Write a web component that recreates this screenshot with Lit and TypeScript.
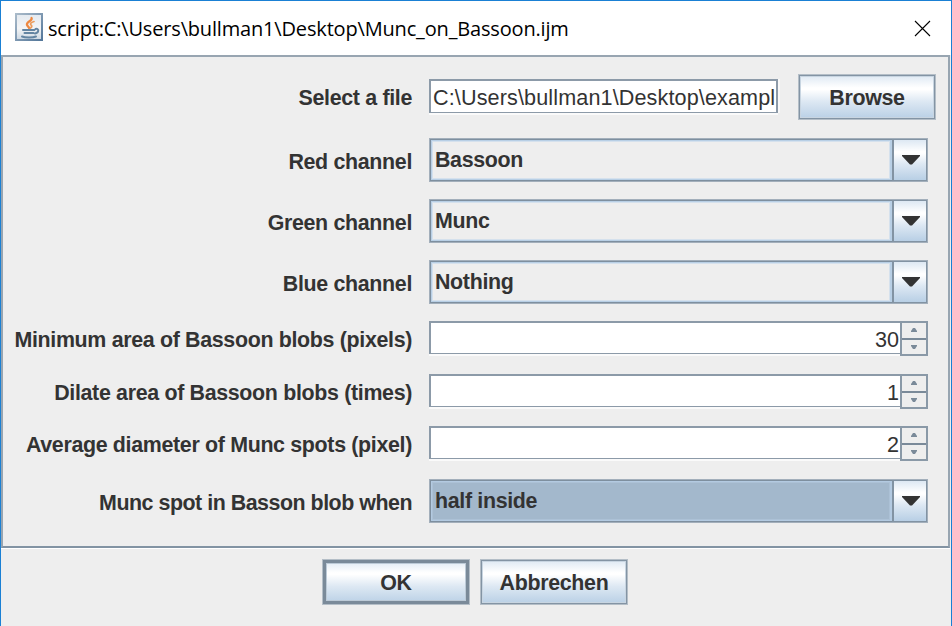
import { LitElement, html, svg, css } from "lit";
import { customElement, property } from "lit/decorators.js";

const metal = css`
  :host { display: block; box-sizing: border-box; }
  * { box-sizing: border-box; }
  .bold { font: bold 21.4px/24px "Liberation Sans", Arial, sans-serif; letter-spacing: -.33px; color: #333; white-space: nowrap; }
  .plain { font: 21.6px/24px "Liberation Sans", Arial, sans-serif; color: #333; white-space: nowrap; }
  .gloss { background: linear-gradient(#dde8f3 0%, #fff 29%, #fff 33%, #dde8f3 60%, #b8cfe5 100%); }
`;

@customElement("metal-button")
class MetalButton extends LitElement {
  @property() label = "";
  @property({ type: Boolean }) primary = false;
  static styles = [metal, css`
    .button { height: 100%; border: 1px solid #b4bec7; box-shadow: inset 0 0 0 1px #8394a4, inset 0 0 0 2px #c8d5e1; display: flex; align-items: center; justify-content: center; padding-top: 2px; }
    .primary { box-shadow: inset 0 0 0 3px #7a8a99, inset 0 0 0 4px #bccad7; }
  `];
  render() {
    return html`<div class="button gloss ${this.primary ? "primary" : ""}"><span class="bold">${this.label}</span></div>`;
  }
}

@customElement("metal-combo")
class MetalCombo extends LitElement {
  @property() value = "";
  @property({ type: Boolean }) focused = false;
  static styles = [metal, css`
    :host { height: 44px; }
    .combo { height: 100%; display: flex; border: 1px solid #a3afbb; }
    .value { flex: 1; padding: 9px 0 0 5px; background: #eee; box-shadow: inset 0 1px 0 #7e8f9f, inset 1px 0 0 #7e8f9f, inset 0 -1px 0 #7e8f9f, inset 0 0 0 2px #b8cfe5, inset 0 0 0 3px #d5e1ed; }
    .focused { background: #a3b8cc; box-shadow: inset 0 1px 0 #7e8f9f, inset 1px 0 0 #7e8f9f, inset 0 -1px 0 #7e8f9f, inset 0 0 0 2px #b3cae1, inset 0 0 0 3px #acc1d6; }
    .arrow { width: 35px; border: solid #8293a3; border-width: 1px 1px 1px 2px; display: flex; align-items: center; justify-content: center; padding-left: 1px; }
  `];
  render() {
    return html`<div class="combo">
      <div class="value bold ${this.focused ? "focused" : ""}">${this.value}</div>
      <div class="arrow gloss"><svg width="18" height="10" viewBox="0 0 18 10"><path d="M0 0H18V1L10 9.500H8L0 1Z" fill="#333"/></svg></div>
    </div>`;
  }
}

@customElement("metal-field")
class MetalField extends LitElement {
  @property() value = "";
  static styles = [metal, css`
    :host { height: 34px; }
    .field { height: 100%; background: #fff; border: 2px solid #8c9aa8; border-bottom-width: 1px; box-shadow: 0 2px 0 #fafafa, 2px 0 0 #f8f8f8; padding: 5px 0 0 2px; overflow: hidden; letter-spacing: .12px; }
  `];
  render() { return html`<div class="field plain">${this.value}</div>`; }
}

@customElement("metal-spinner")
class MetalSpinner extends LitElement {
  @property({ type: Number }) value = 0;
  static styles = [metal, css`
    :host { height: 35px; }
    .spinner { height: 100%; display: flex; }
    .number { flex: 1; height: 33px; background: #fff; border: 2px solid #8c9aa8; border-right: 0; border-bottom-width: 1px; box-shadow: 0 2px 0 #fafafa; text-align: right; padding: 5px 1px 0 0; }
    .steps { width: 28px; display: flex; flex-direction: column; border: 2px solid #8a99a7; background: #eee; }
    .step { flex: 1; display: flex; align-items: center; justify-content: center; }
    .step + .step { border-top: 2px solid #7a8a99; }
  `];
  render() {
    return html`<div class="spinner">
      <div class="number plain">${this.value}</div>
      <div class="steps">
        <div class="step"><svg width="6" height="4" viewBox="0 0 6 4"><path d="M2 0H4L6 3V4H0V3Z" fill="#7a8a99"/></svg></div>
        <div class="step"><svg width="6" height="4" viewBox="0 0 6 4"><path d="M0 0H6V1L4 4H2L0 1Z" fill="#7a8a99"/></svg></div>
      </div>
    </div>`;
  }
}

const javaIcon = svg`
  <defs><linearGradient id="tile" x2="0" y2="1"><stop stop-color="#e3e9ef"/><stop offset=".55" stop-color="#f4f5f6"/><stop offset="1" stop-color="#cbd7e2"/></linearGradient>
  <linearGradient id="edge" x2="1" y2="1"><stop stop-color="#a9bac9"/><stop offset="1" stop-color="#54779a"/></linearGradient></defs>
  <rect x="1" y="1" width="26" height="26" fill="url(#tile)" stroke="url(#edge)" stroke-width="2"/>
  <g fill="none" stroke-linecap="round">
    <path d="M16.500 5C18 8 11 8.500 12 12C12.300 13 14 14 14 15" stroke="#ee8840" stroke-width="2.300"/>
    <path d="M19 8.500C15.500 9.500 14.500 11 16.500 12.500C17 13.500 16.500 14.500 15.500 15" stroke="#ec9c5c" stroke-width="1.700"/>
    <path d="M8 17H19.500M9.500 20H18.500M20.500 16C24.500 15 24 20 20 20.500M7 23.500C10 24.800 18 24.800 21 23.500" stroke="#6485a2" stroke-width="2"/>
  </g>`;

@customElement("app-root")
class AppRoot extends LitElement {
  static styles = [metal, css`
    .window { width: 952px; height: 626px; background: #eee; border: 1px solid #1a80d4; border-bottom: 0; display: flex; flex-direction: column; }
    .title { height: 54px; background: #fff; display: flex; align-items: center; padding: 0 20px 0 14px; }
    .logo { margin: -2px 5px 0 0; }
    .name { flex: 1; padding-top: 1px; font: 20px/28px "Open Sans", "Noto Sans", sans-serif; letter-spacing: -.17px; color: #000; }
    .panel { height: 493px; margin-right: 1px; border: 2px solid #98a5b1; border-bottom-color: #8293a3; box-shadow: 0 1px 0 #fff; display: grid; grid-template-columns: 409px 499px; column-gap: 17px; grid-template-rows: 64px 61px 61px 61px 53px 52px 53px 46px; padding-top: 17px; align-items: start; }
    .label { text-align: right; }
    .over { padding-top: 12px; }
    .tall { padding-top: 12px; }
    .short { padding-top: 7px; }
    .last { letter-spacing: -.48px; }
    .file { display: flex; width: 507px; justify-content: space-between; }
    .path { width: 349px; margin-top: 5px; }
    .browse { width: 138px; height: 46px; }
    .actions { display: flex; gap: 10px; padding: 11px 0 0 321px; }
    .action { width: 148px; height: 46px; }
  `];
  render() {
    return html`<div class="window">
      <div class="title">
        <svg class="logo" width="28" height="28" viewBox="0 0 28 28">${javaIcon}</svg>
        <span class="name">script:C:\\Users\\bullman1\\Desktop\\Munc_on_Bassoon.ijm</span>
        <svg width="17" height="17" viewBox="0 0 17 17"><path d="M1 1L16 16M16 1L1 16" stroke="#000" stroke-width="1.1"/></svg>
      </div>
      <div class="panel">
        <div class="label bold over">Select a file</div>
        <div class="file"><metal-field class="path" value="C:\\Users\\bullman1\\Desktop\\exampl"></metal-field><metal-button class="browse" label="Browse"></metal-button></div>
        <div class="label bold tall">Red channel</div><metal-combo value="Bassoon"></metal-combo>
        <div class="label bold tall">Green channel</div><metal-combo value="Munc"></metal-combo>
        <div class="label bold tall">Blue channel</div><metal-combo value="Nothing"></metal-combo>
        <div class="label bold short">Minimum area of Bassoon blobs (pixels)</div><metal-spinner value="30"></metal-spinner>
        <div class="label bold short">Dilate area of Bassoon blobs (times)</div><metal-spinner value="1"></metal-spinner>
        <div class="label bold short">Average diameter of Munc spots (pixel)</div><metal-spinner value="2"></metal-spinner>
        <div class="label bold tall last">Munc spot in Basson blob when</div><metal-combo value="half inside" focused></metal-combo>
      </div>
      <div class="actions"><metal-button class="action" label="OK" primary></metal-button><metal-button class="action" label="Abbrechen"></metal-button></div>
    </div>`;
  }
}
